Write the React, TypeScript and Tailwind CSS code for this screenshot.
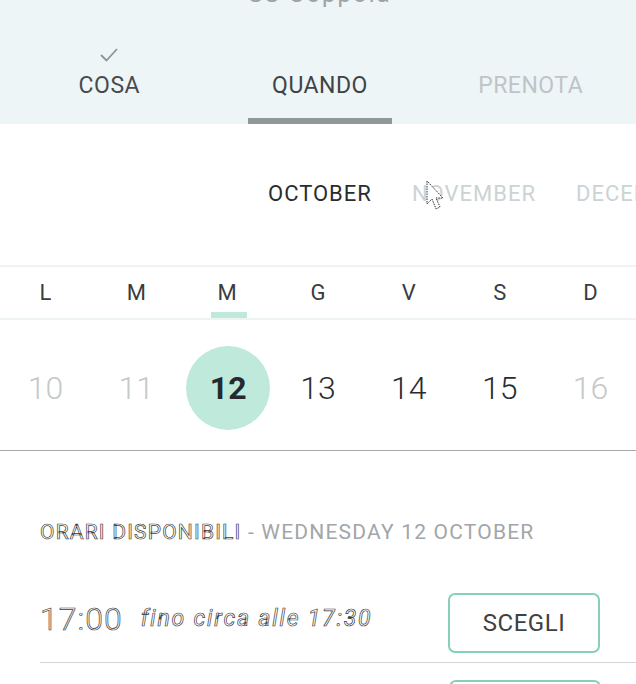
import React from "react";

const days = [
  { d: "L", n: 10, muted: true },
  { d: "M", n: 11, muted: true },
  { d: "M", n: 12, selected: true },
  { d: "G", n: 13 },
  { d: "V", n: 14 },
  { d: "S", n: 15 },
  { d: "D", n: 16, muted: true },
];

function Cursor() {
  return (
    <svg
      className="absolute left-[426px] top-[180px]"
      width="20"
      height="32"
      viewBox="0 0 20 32"
    >
      <path
        d="M1 1 L1 24 L6 19 L10 29 L14 27 L10 18 L17 18 Z"
        fill="white"
        stroke="#333"
        strokeWidth="1"
        strokeDasharray="1.5 1"
      />
    </svg>
  );
}

export default function App() {
  return (
    <div
      className="relative h-[684px] w-[636px] overflow-hidden bg-white"
      style={{ fontFamily: "Roboto, 'Liberation Sans', sans-serif" }}
    >
      {/* Header with steps */}
      <div className="flex h-[124px] flex-col overflow-hidden bg-[#edf5f7]">
        <div className="-mt-[16px] h-[20px] pl-[4px] text-center text-[24px] leading-[20px] tracking-[2px] text-[#9ea3a5]">
          SS Coppola
        </div>
        <div className="mt-auto grid grid-cols-3 pl-[4px]">
          <div className="flex flex-col items-center">
            <svg width="20" height="16" viewBox="0 0 20 16" className="mb-[9px] mt-[2px]">
              <path d="M2 8 L7.5 13.5 L18 2" fill="none" stroke="#8f9597" strokeWidth="1.8" />
            </svg>
            <span className="text-[23px] leading-[28px] tracking-[0.5px] text-[#474b4d]">COSA</span>
            <div className="mt-[18px] h-[6px]" />
          </div>
          <div className="flex flex-col items-center justify-end">
            <span className="text-[23px] leading-[28px] tracking-[0.5px] text-[#3f4345]">QUANDO</span>
            <div className="mt-[18px] h-[6px] w-[144px] bg-[#8f9799]" />
          </div>
          <div className="flex flex-col items-center justify-end">
            <span className="text-[23px] leading-[28px] tracking-[0.5px] text-[#bfc4c6]">PRENOTA</span>
            <div className="mt-[18px] h-[6px]" />
          </div>
        </div>
      </div>

      {/* Months */}
      <div className="flex h-[141px] items-center gap-[40px] whitespace-nowrap pb-[3px] pl-[268px] text-[22px] tracking-[1px]">
        <span className="text-[#2a2d2f]">OCTOBER</span>
        <span className="text-[#ccd3d5]">NOVEMBER</span>
        <span className="text-[#ccd3d5]">DECEMBER</span>
      </div>

      {/* Week days */}
      <div className="grid grid-cols-7 border-y-2 border-[#eef4f6]">
        {days.map((x, i) => (
          <div key={i} className="flex h-[51px] flex-col items-center justify-end">
            <span className="text-[22px] leading-[26px] text-[#3a3d3f]">{x.d}</span>
            <div className={`ml-[3px] mt-[6px] h-[6px] w-[36px] ${x.selected ? "bg-[#bfeadb]" : ""}`} />
          </div>
        ))}
      </div>

      {/* Day numbers */}
      <div className="grid h-[131px] grid-cols-7 items-center border-b border-[#a6a9ab] pt-[6px]">
        {days.map((x, i) => (
          <div key={i} className="flex items-center justify-center">
            {x.selected ? (
              <div className="ml-[2px] flex h-[84px] w-[84px] items-center justify-center rounded-full bg-[#bfeadb] text-[32px] font-bold text-[#262a2c]">
                {x.n}
              </div>
            ) : (
              <span className={`text-[32px] font-light ${x.muted ? "text-[#c4c8ca]" : "text-[#2a2d2f]"}`}>{x.n}</span>
            )}
          </div>
        ))}
      </div>

      {/* Available times */}
      <div className="pl-[40px] pt-[69px] [-webkit-font-smoothing:antialiased]">
        <div className="whitespace-nowrap text-[21px] leading-6 tracking-[1.2px] text-[#a2a6a8]">
          <span className="text-white [-webkit-text-stroke:0.7px_#3a3a3a]">ORARI DISPONIBILI</span> - WEDNESDAY 12 OCTOBER
        </div>
        <div className="mt-[40px] flex h-[79px] items-center border-b border-[#d4d6d7]">
          <span className="mt-[-8px] text-[32px] font-light tracking-[1px] text-white [-webkit-text-stroke:0.7px_#3a3a3a]">17:00</span>
          <span className="ml-[18px] mt-[-8px] text-[23px] italic tracking-[1.8px] text-white [-webkit-text-stroke:0.7px_#3a3a3a]">
            fino circa alle 17:30
          </span>
          <button className="ml-auto mr-[36px] flex h-[60px] w-[152px] items-center justify-center rounded-[7px] border-2 border-[#85d0b8] text-[24px] tracking-[0.5px] text-[#3d4143]">
            SCEGLI
          </button>
        </div>
        <div className="ml-[409px] mt-[17px] h-[60px] w-[152px] rounded-[7px] border-2 border-[#85d0b8]" />
      </div>

      <Cursor />
    </div>
  );
}
